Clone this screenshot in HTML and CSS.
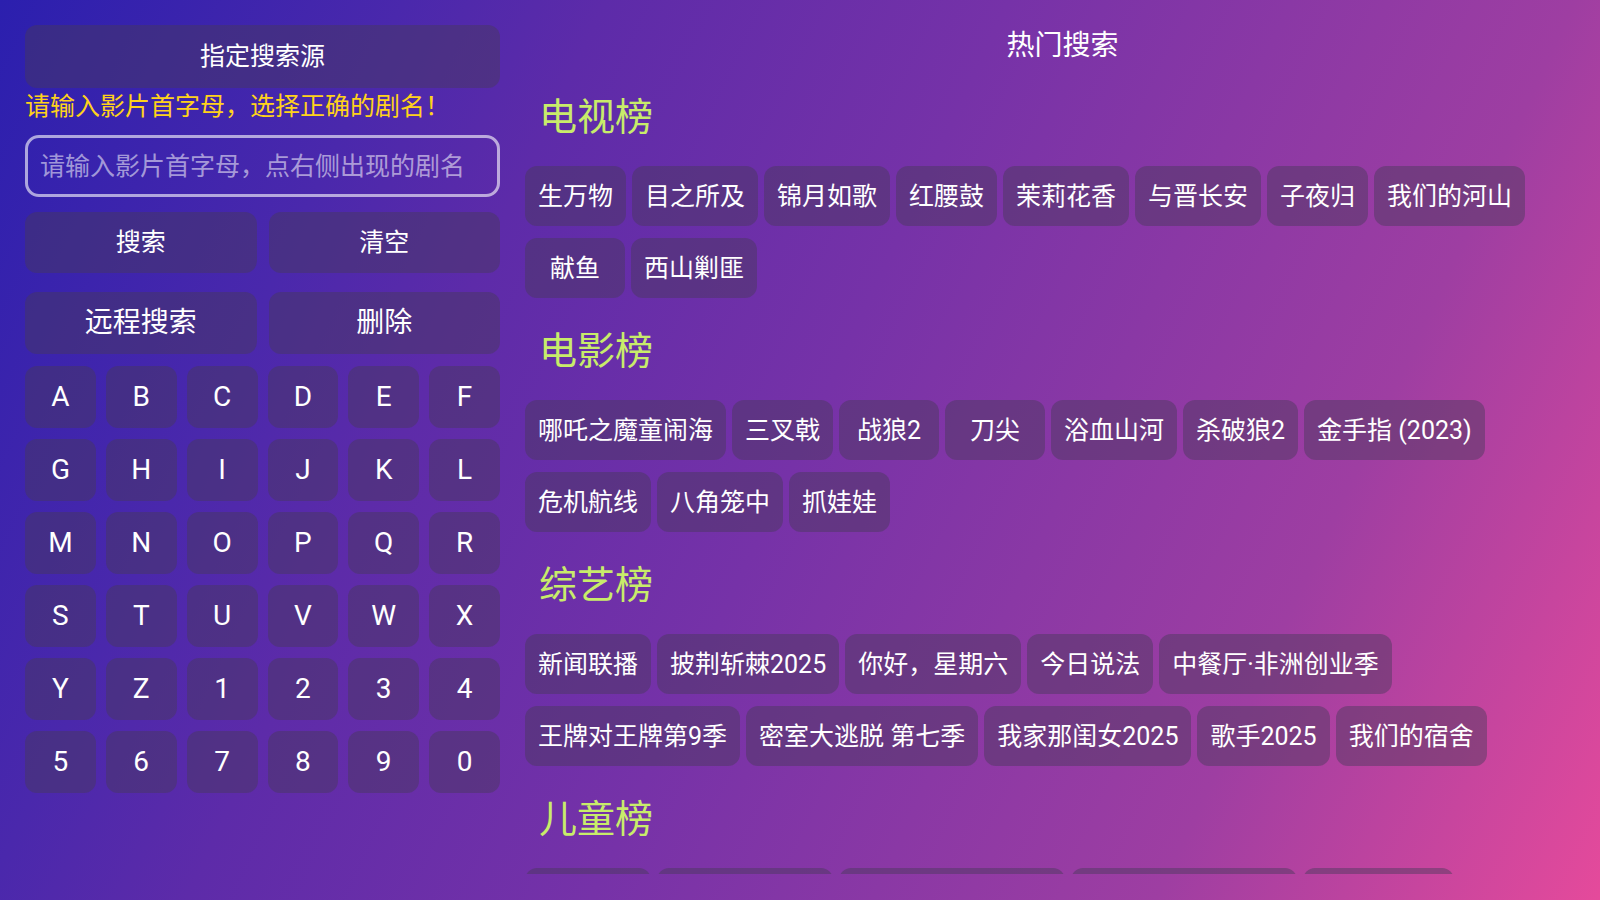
FILE: index.html
```html
<!DOCTYPE html>
<html lang="zh-CN">
<head>
<meta charset="utf-8">
<title>搜索</title>
<link rel="stylesheet" href="styles.css">
</head>
<body>
<div class="app">
  <aside class="left">
    <div class="btn src">指定搜索源</div>
    <p class="warn">请输入影片首字母，选择正确的剧名！</p>
    <input class="search" type="text" placeholder="请输入影片首字母，点右侧出现的剧名">
    <div class="actions">
      <div class="btn act">搜索</div>
      <div class="btn act">清空</div>
    </div>
    <div class="actions big">
      <div class="btn act">远程搜索</div>
      <div class="btn act">删除</div>
    </div>
    <div class="keys">
      <div class="btn key">A</div><div class="btn key">B</div><div class="btn key">C</div><div class="btn key">D</div><div class="btn key">E</div><div class="btn key">F</div>
      <div class="btn key">G</div><div class="btn key">H</div><div class="btn key">I</div><div class="btn key">J</div><div class="btn key">K</div><div class="btn key">L</div>
      <div class="btn key">M</div><div class="btn key">N</div><div class="btn key">O</div><div class="btn key">P</div><div class="btn key">Q</div><div class="btn key">R</div>
      <div class="btn key">S</div><div class="btn key">T</div><div class="btn key">U</div><div class="btn key">V</div><div class="btn key">W</div><div class="btn key">X</div>
      <div class="btn key">Y</div><div class="btn key">Z</div><div class="btn key">1</div><div class="btn key">2</div><div class="btn key">3</div><div class="btn key">4</div>
      <div class="btn key">5</div><div class="btn key">6</div><div class="btn key">7</div><div class="btn key">8</div><div class="btn key">9</div><div class="btn key">0</div>
    </div>
  </aside>
  <main class="right">
    <h1 class="title">热门搜索</h1>
    <section class="sec">
      <h2 class="sec-title">电视榜</h2>
      <div class="chips">
        <span class="chip">生万物</span><span class="chip">目之所及</span><span class="chip">锦月如歌</span><span class="chip">红腰鼓</span><span class="chip">茉莉花香</span><span class="chip">与晋长安</span><span class="chip">子夜归</span><span class="chip">我们的河山</span><span class="chip">献鱼</span><span class="chip">西山剿匪</span>
      </div>
    </section>
    <section class="sec">
      <h2 class="sec-title">电影榜</h2>
      <div class="chips">
        <span class="chip">哪吒之魔童闹海</span><span class="chip">三叉戟</span><span class="chip">战狼2</span><span class="chip">刀尖</span><span class="chip">浴血山河</span><span class="chip">杀破狼2</span><span class="chip">金手指 (2023)</span><span class="chip">危机航线</span><span class="chip">八角笼中</span><span class="chip">抓娃娃</span>
      </div>
    </section>
    <section class="sec">
      <h2 class="sec-title">综艺榜</h2>
      <div class="chips">
        <span class="chip">新闻联播</span><span class="chip">披荆斩棘2025</span><span class="chip">你好，星期六</span><span class="chip">今日说法</span><span class="chip">中餐厅·非洲创业季</span><span class="chip">王牌对王牌第9季</span><span class="chip">密室大逃脱 第七季</span><span class="chip">我家那闺女2025</span><span class="chip">歌手2025</span><span class="chip">我们的宿舍</span>
      </div>
    </section>
    <section class="sec">
      <h2 class="sec-title">儿童榜</h2>
      <div class="chips">
        <span class="chip">小猪佩奇</span><span class="chip">汪汪队立大功</span><span class="chip">熊出没之伴我熊芯</span><span class="chip">超级飞侠第十七季</span><span class="chip">海底小纵队</span>
      </div>
    </section>
  </main>
</div>
</body>
</html>
```

FILE: styles.css
```css
html, body {
  margin: 0;
  padding: 0;
}

body {
  width: 1600px;
  height: 900px;
  overflow: hidden;
  font-family: Roboto, "Noto Sans CJK SC", sans-serif;
  color: #ffffff;
  background: linear-gradient(115deg, #2b1fae 0%, #4a28ac 20%, #5d2ba9 30%, #7632a8 50%, #9e3ea2 78%, #e54a9b 100%);
}

.app {
  box-sizing: border-box;
  width: 1600px;
  height: 900px;
  padding: 25px 0 26px 25px;
  display: flex;
  gap: 25px;
}

/* ---------- left panel ---------- */
.left {
  width: 475px;
  flex: none;
  display: flex;
  flex-direction: column;
}

.btn {
  display: flex;
  align-items: center;
  justify-content: center;
  background: rgba(72, 58, 88, 0.45);
  border-radius: 12px;
  color: #ffffff;
  line-height: 30px;
}

.src {
  height: 63px;
  font-size: 25px;
}

.warn {
  margin: 0;
  padding-top: 2px;
  font-size: 25px;
  line-height: 33px;
  color: #ffd21a;
  white-space: nowrap;
}

.search {
  box-sizing: border-box;
  margin-top: 12px;
  width: 475px;
  height: 62px;
  padding: 0 12px;
  border: 3px solid rgba(255, 255, 255, 0.6);
  border-radius: 14px;
  background: transparent;
  font-family: Roboto, "Noto Sans CJK SC", sans-serif;
  font-size: 25px;
  color: #ffffff;
  outline: none;
}

.search::placeholder {
  color: rgba(255, 255, 255, 0.55);
}

.actions {
  margin-top: 15px;
  display: grid;
  grid-template-columns: 1fr 1fr;
  column-gap: 12px;
}

.actions .act {
  height: 61px;
  font-size: 25px;
}

.actions.big {
  margin-top: 19px;
}

.actions.big .act {
  height: 62px;
  font-size: 28px;
}

.keys {
  margin-top: 12px;
  display: grid;
  grid-template-columns: repeat(6, 1fr);
  grid-auto-rows: 62px;
  column-gap: 10px;
  row-gap: 11px;
}

.key {
  font-size: 28px;
}

/* ---------- right panel ---------- */
.right {
  flex: 1;
  min-width: 0;
  overflow: hidden;
}

.title {
  margin: 0;
  padding-top: 3px;
  font-size: 28px;
  line-height: 36px;
  font-weight: 400;
  text-align: center;
}

.sec {
  margin-top: 30.5px;
}

.sec-title {
  margin: 0 0 27.5px 0;
  padding-left: 14px;
  font-size: 38px;
  line-height: 44px;
  font-weight: 400;
  color: #c8ec6a;
}

.chips {
  display: flex;
  flex-wrap: wrap;
  column-gap: 6px;
  row-gap: 12px;
}

.chip {
  box-sizing: border-box;
  min-width: 100px;
  height: 60px;
  padding: 1px 13px 0 13px;
  display: flex;
  align-items: center;
  justify-content: center;
  font-size: 25px;
  line-height: 30px;
  white-space: nowrap;
  background: rgba(72, 58, 88, 0.45);
  border-radius: 12px;
}
```
